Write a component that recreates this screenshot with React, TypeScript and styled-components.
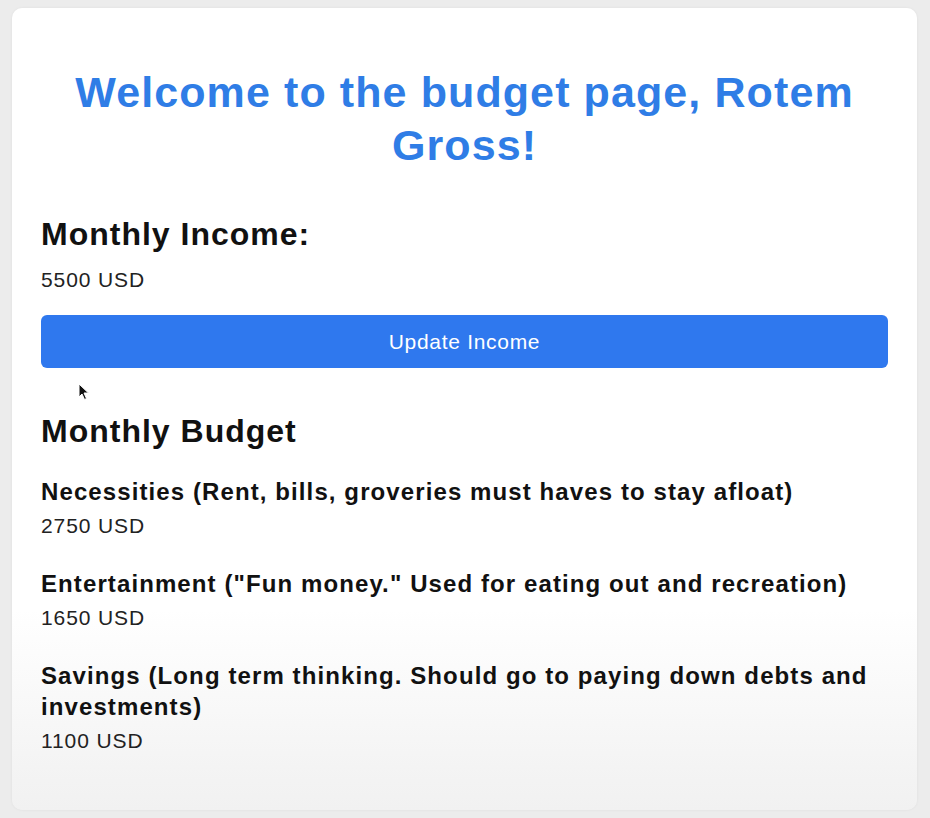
import React from "react";
import styled, { createGlobalStyle } from "styled-components";

const Global = createGlobalStyle`
  html, body { margin: 0; padding: 0; background: #ececec; }
  body { font-family: "Liberation Sans", Arial, sans-serif; }
`;

const Page = styled.div`
  width: 930px;
  height: 818px;
  box-sizing: border-box;
  padding: 8px 13px 8px 12px;
  display: flex;
`;

const Card = styled.main`
  position: relative;
  flex: 1;
  background: linear-gradient(to bottom, #ffffff 0%, #ffffff 75%, #f1f1f1 100%);
  border-radius: 10px;
  box-shadow: 0 0 3px rgba(0, 0, 0, 0.06);
  padding: 58px 29px 0 29px;
  display: flex;
  flex-direction: column;
`;

const Title = styled.h1`
  margin: 0 0 44px;
  text-align: center;
  color: #2f7de6;
  font-size: 43px;
  letter-spacing: 1.1px;
  line-height: 53px;
  font-weight: 700;
  padding: 0 30px;
`;

const SectionTitle = styled.h2`
  margin: 0;
  color: #111;
  font-size: 32px;
  letter-spacing: 1px;
  line-height: 36px;
  font-weight: 700;
`;

const Amount = styled.p`
  margin: 0;
  color: #222;
  font-size: 21px;
  letter-spacing: 0.9px;
  line-height: 24px;
`;

const IncomeAmount = styled(Amount)`
  margin-top: 16px;
`;

const UpdateButton = styled.button`
  margin-top: 23px;
  height: 53px;
  width: 100%;
  border: none;
  border-radius: 6px;
  background: #2f78ee;
  color: #ffffff;
  font-family: "Liberation Sans", Arial, sans-serif;
  font-size: 21px;
  letter-spacing: 0.7px;
  cursor: pointer;
`;

const BudgetTitle = styled(SectionTitle)`
  margin-top: 45px;
`;

const BudgetList = styled.div`
  margin-top: 27px;
  display: flex;
  flex-direction: column;
  gap: 30px;
`;

const Item = styled.div`
  display: flex;
  flex-direction: column;
  gap: 7px;
`;

const ItemLabel = styled.h3`
  margin: 0;
  color: #111;
  font-size: 24px;
  letter-spacing: 1.1px;
  line-height: 31px;
  font-weight: 700;
`;

const Cursor = styled.svg`
  position: absolute;
  left: 66px;
  top: 375px;
`;

const items = [
  { label: "Necessities (Rent, bills, groveries must haves to stay afloat)", value: "2750 USD" },
  { label: 'Entertainment ("Fun money." Used for eating out and recreation)', value: "1650 USD" },
  { label: "Savings (Long term thinking. Should go to paying down debts and investments)", value: "1100 USD" },
];

export default function App() {
  return (
    <>
      <Global />
      <Page>
        <Card>
          <Title>Welcome to the budget page, Rotem Gross!</Title>
          <SectionTitle>Monthly Income:</SectionTitle>
          <IncomeAmount>5500 USD</IncomeAmount>
          <UpdateButton>Update Income</UpdateButton>
          <BudgetTitle>Monthly Budget</BudgetTitle>
          <BudgetList>
            {items.map((it) => (
              <Item key={it.value}>
                <ItemLabel>{it.label}</ItemLabel>
                <Amount>{it.value}</Amount>
              </Item>
            ))}
          </BudgetList>
          <Cursor width="12" height="18" viewBox="0 0 12 18">
            <path d="M1 1 L1 14 L4 11 L6.5 16.5 L8.5 15.5 L6 10 L10.5 10 Z" fill="#111" stroke="#fff" strokeWidth="1" />
          </Cursor>
        </Card>
      </Page>
    </>
  );
}
